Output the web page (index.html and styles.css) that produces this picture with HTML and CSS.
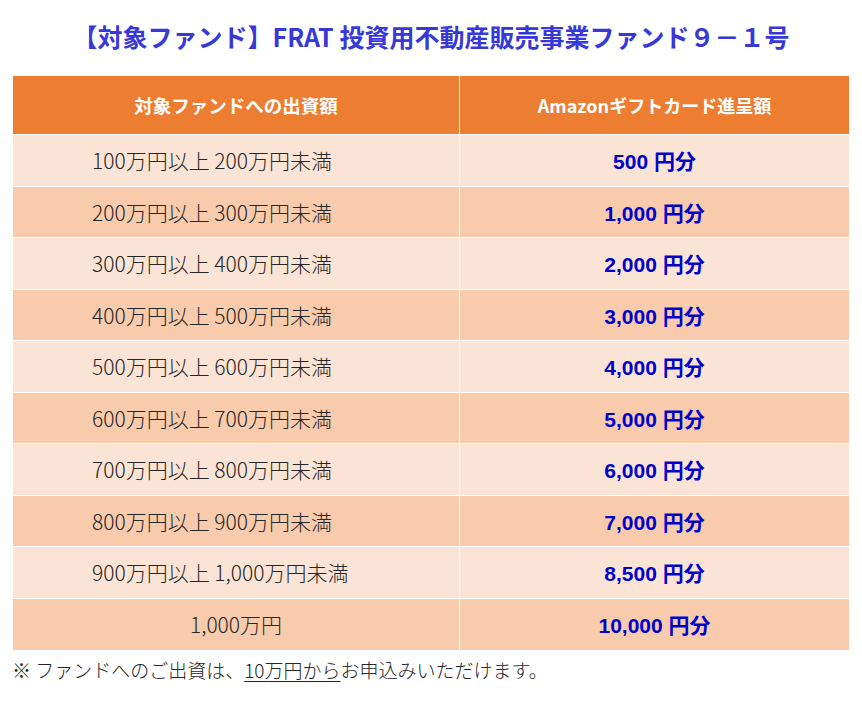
FILE: index.html
```html
<!DOCTYPE html>
<html lang="ja">
<head>
<meta charset="utf-8">
<link rel="stylesheet" href="styles.css">
</head>
<body>
<div class="page">
  <h1 class="title">【対象ファンド】FRAT 投資用不動産販売事業ファンド９－１号</h1>
  <table class="gift">
    <thead>
      <tr><th class="c-left">対象ファンドへの出資額</th><th class="c-right">Amazonギフトカード進呈額</th></tr>
    </thead>
    <tbody>
      <tr class="odd"><td class="amt">100万円以上 200万円未満</td><td class="gift-v">500 円分</td></tr>
      <tr class="even"><td class="amt">200万円以上 300万円未満</td><td class="gift-v">1,000 円分</td></tr>
      <tr class="odd"><td class="amt">300万円以上 400万円未満</td><td class="gift-v">2,000 円分</td></tr>
      <tr class="even"><td class="amt">400万円以上 500万円未満</td><td class="gift-v">3,000 円分</td></tr>
      <tr class="odd"><td class="amt">500万円以上 600万円未満</td><td class="gift-v">4,000 円分</td></tr>
      <tr class="even"><td class="amt">600万円以上 700万円未満</td><td class="gift-v">5,000 円分</td></tr>
      <tr class="odd"><td class="amt">700万円以上 800万円未満</td><td class="gift-v">6,000 円分</td></tr>
      <tr class="even"><td class="amt">800万円以上 900万円未満</td><td class="gift-v">7,000 円分</td></tr>
      <tr class="odd"><td class="amt">900万円以上 1,000万円未満</td><td class="gift-v">8,500 円分</td></tr>
      <tr class="even"><td class="amt center">1,000万円</td><td class="gift-v">10,000 円分</td></tr>
    </tbody>
  </table>
  <p class="note">※ ファンドへのご出資は、<span class="ul">10万円から</span>お申込みいただけます。</p>
</div>
</body>
</html>
```
FILE: styles.css
```css
html, body {
  margin: 0;
  padding: 0;
  background: #ffffff;
}
.page {
  padding: 0 13px 0 13px;
  font-family: "Noto Sans CJK JP", "Noto Sans", sans-serif;
}
.title {
  margin: 0;
  padding-top: 20px;
  height: 76px;
  box-sizing: border-box;
  text-align: center;
  font-size: 25px;
  line-height: 32px;
  font-weight: 700;
  color: #3838d8;
  letter-spacing: 0;
}
.gift {
  width: 836px;
  border-collapse: collapse;
  table-layout: fixed;
}
.gift th {
  background: #ed7d31;
  color: #ffffff;
  font-size: 18px;
  font-weight: 700;
  height: 58px;
  padding: 0;
  border: 1px solid #ffffff;
  border-top: none;
}
.gift th.c-left { width: 446px; border-left: none; font-size: 18.5px; }
.gift th.c-right { border-right: none; }
.gift td {
  height: 51.5px;
  padding: 0;
  border: 1px solid #ffffff;
  box-sizing: border-box;
}
.gift td:first-child { border-left: none; }
.gift td:last-child { border-right: none; }
.gift tbody tr:last-child td { border-bottom: none; }
.odd td { background: #fbe4d5; }
.even td { background: #f8cbad; }
.amt {
  padding-left: 79px !important;
  text-align: left;
  font-size: 21px;
  font-weight: 300;
  color: #262626;
}
.amt.center {
  padding-left: 0 !important;
  text-align: center;
}
.gift-v {
  text-align: center;
  font-size: 21px;
  font-weight: 700;
  color: #0000cc;
  font-family: "Liberation Sans", "Noto Sans CJK JP", sans-serif;
}
.note {
  margin: 6px 0 0 -1px;
  font-size: 19px;
  line-height: 28px;
  font-weight: 300;
  color: #262626;
}
.ul {
  text-decoration: underline;
  text-underline-offset: 3px;
}
```
